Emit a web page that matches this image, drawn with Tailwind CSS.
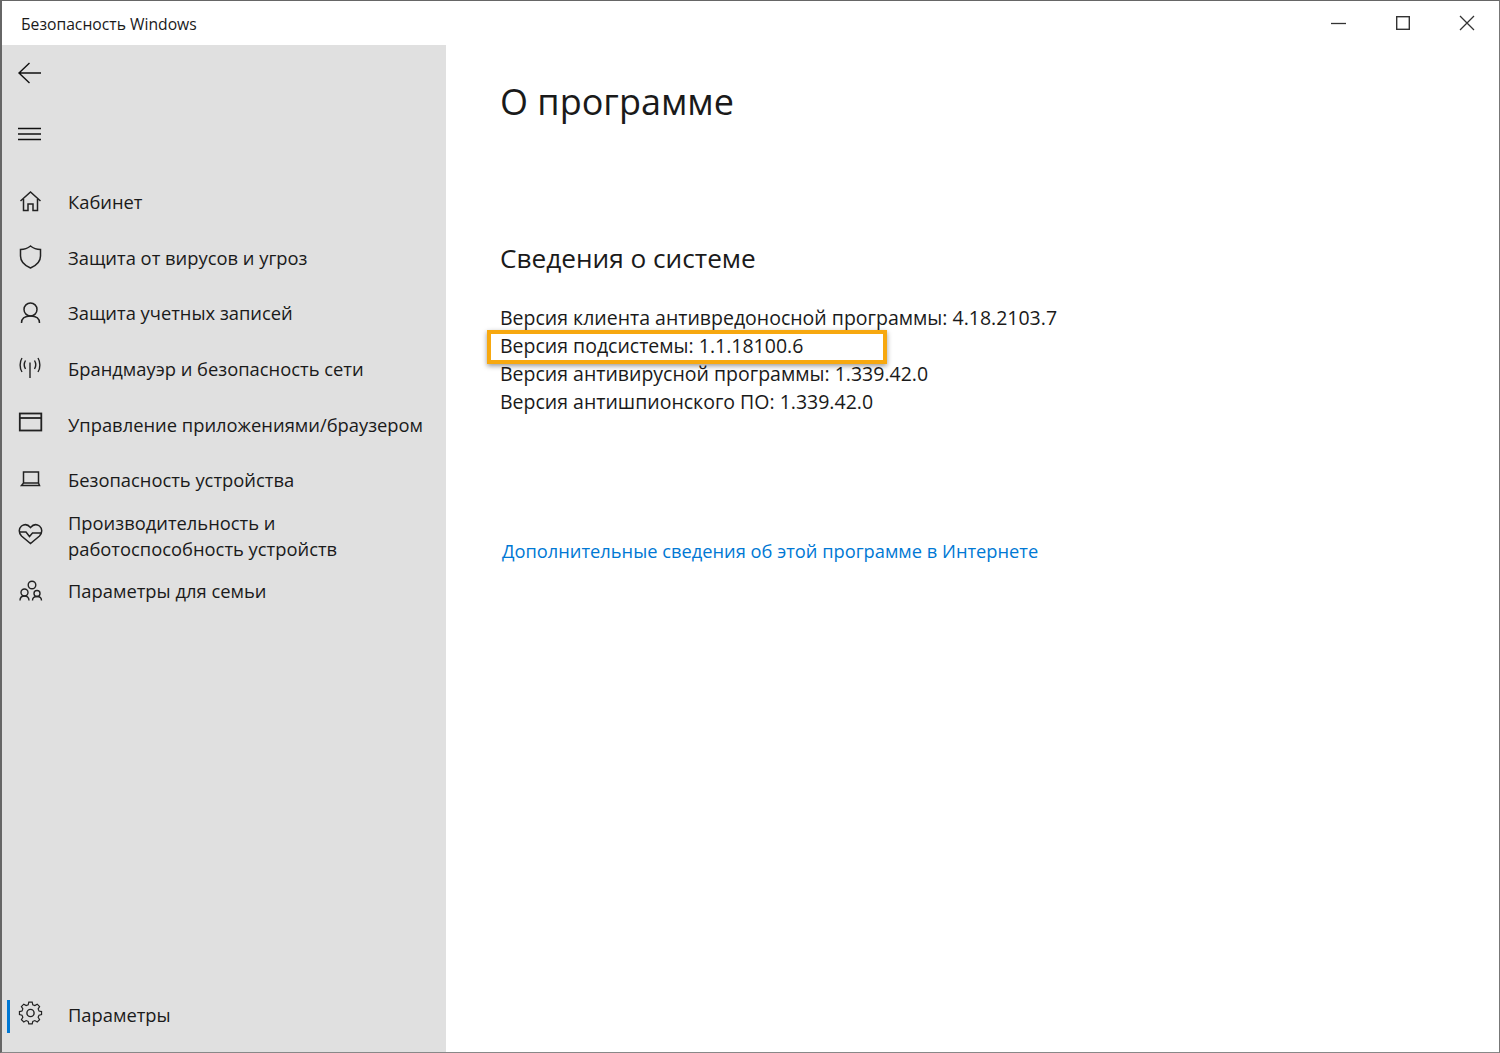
<!DOCTYPE html>
<html lang="ru">

<head>
  <meta charset="UTF-8" />
  <meta name="viewport" content="width=device-width, initial-scale=1.0" />
  <title>Безопасность Windows</title>
  <script src="https://cdn.jsdelivr.net/npm/@tailwindcss/browser@4"></script>
</head>

<body class="bg-white font-['Open_Sans','Noto_Sans',sans-serif] text-[#1a1a1a]">
  <div class="w-[1500px] h-[1053px] flex flex-col overflow-hidden border-t border-t-[#666] border-l-2 border-l-[#666] border-r border-r-[#777] border-b border-b-[#888]">

    <!-- title bar -->
    <header class="h-[44px] shrink-0 flex items-center justify-between bg-white">
      <span class="pl-[19px] text-[15.7px] pt-[3px]">Безопасность Windows</span>
      <div class="flex items-center pr-[22px] gap-[44px]">
        <svg width="20" height="20" viewBox="0 0 20 20" fill="none" stroke="#333" stroke-width="1.3"><path d="M2 10.500h15" /></svg>
        <svg width="20" height="20" viewBox="0 0 20 20" fill="none" stroke="#333" stroke-width="1.4"><rect x="3.700" y="3.700" width="12.600" height="12.600" /></svg>
        <svg width="20" height="20" viewBox="0 0 20 20" fill="none" stroke="#333" stroke-width="1.3"><path d="M3 3l14 14M17 3L3 17" /></svg>
      </div>
    </header>

    <div class="flex-1 flex min-h-0">
      <!-- sidebar -->
      <aside class="w-[444px] shrink-0 bg-[#e0e0e0] flex flex-col text-[18.35px] leading-[26px]">
        <div class="h-[55px] flex items-center pl-[15px]">
          <svg width="26" height="24" viewBox="0 0 26 24" fill="none" stroke="#111" stroke-width="1.4"><path d="M24 12H2M12.500 2L2 12l10.500 10" /></svg>
        </div>
        <div class="h-[68px] flex items-center pl-[15px] mb-[6.500px]">
          <svg width="24" height="16" viewBox="0 0 24 16" fill="none" stroke="#111" stroke-width="1.4"><path d="M1 2.500h23M1 8h23M1 13.500h23" /></svg>
        </div>

        <nav class="flex flex-col">
          <a class="h-[55.6px] flex items-center gap-[25px] pl-[15px]">
            <svg class="shrink-0 -mt-[2px]" width="26" height="26" viewBox="0 0 26 26" fill="none" stroke="#222" stroke-width="1.5"><path d="M3.500 13L13.500 4l10 9M6.500 11v11.500H11V16h5v6.500h4.500V11" /></svg>
            <span>Кабинет</span>
          </a>
          <a class="h-[55.6px] flex items-center gap-[25px] pl-[15px]">
            <svg class="shrink-0 -mt-[2px]" width="26" height="26" viewBox="0 0 26 26" fill="none" stroke="#222" stroke-width="1.5"><path d="M13.500 2c3 2.500 6 3.500 10 3.500V12c0 6-4 9.500-10 12-6-2.500-10-6-10-12V5.500c4 0 7-1 10-3.500z" /></svg>
            <span>Защита от вирусов и угроз</span>
          </a>
          <a class="h-[55.6px] flex items-center gap-[25px] pl-[15px]">
            <svg class="shrink-0 -mt-[2px]" width="26" height="26" viewBox="0 0 26 26" fill="none" stroke="#222" stroke-width="1.5"><circle cx="13.500" cy="10.500" r="6.500" /><path d="M4.500 24c0-4.500 3.500-7 9-7s9 2.500 9 7" /></svg>
            <span>Защита учетных записей</span>
          </a>
          <a class="h-[55.6px] flex items-center gap-[25px] pl-[15px]">
            <svg class="shrink-0 -mt-[5px]" width="26" height="26" viewBox="0 0 26 26" fill="none" stroke="#222" stroke-width="1.4"><path d="M13 8.500V24M8.500 6.500c-1.500 2.500-1.500 6 0 8.500M17.500 6.500c1.500 2.500 1.500 6 0 8.500M5 4c-2.500 4-2.500 10 0 14M21 4c2.500 4 2.500 10 0 14" /></svg>
            <span>Брандмауэр и безопасность сети</span>
          </a>
          <a class="h-[55.6px] flex items-center gap-[25px] pl-[15px]">
            <svg class="shrink-0 -mt-[3px]" width="26" height="26" viewBox="0 0 26 26" fill="none" stroke="#222" stroke-width="1.8"><rect x="2.800" y="3.500" width="21.500" height="17" /><path d="M2.800 8h21.500" /></svg>
            <span>Управление приложениями/браузером</span>
          </a>
          <a class="h-[55.6px] flex items-center gap-[25px] pl-[15px]">
            <svg class="shrink-0 -mt-[2px]" width="26" height="26" viewBox="0 0 26 26" fill="none" stroke="#222" stroke-width="1.5"><path d="M6.500 17V6H21.500V17M4.500 19.500h18L21.500 17h-15z" /></svg>
            <span>Безопасность устройства</span>
          </a>
          <a class="h-[55.6px] flex items-center gap-[25px] pl-[15px]">
            <svg class="shrink-0 -mt-[4px]" width="26" height="26" viewBox="0 0 26 26" fill="none" stroke="#222" stroke-width="1.5"><path d="M4.500 15C1.500 12 1.500 7.500 4.500 5c3-2 6.500-1.500 9 1.500 2.500-3 6-3.500 9-1.500 3 2.500 3 7 0 10l-9 7.500z" /><path d="M3 11h6l3.500 4.500 3-3.500h8.500" /></svg>
            <span>Производительность и<br />работоспособность устройств</span>
          </a>
          <a class="h-[55.6px] flex items-center gap-[25px] pl-[15px]">
            <svg class="shrink-0 -mt-[2px]" width="26" height="26" viewBox="0 0 26 26" fill="none" stroke="#222" stroke-width="1.4"><circle cx="15" cy="8" r="3.800" /><circle cx="7.500" cy="15.500" r="3.500" /><circle cx="20" cy="16.500" r="3" /><path d="M3 23.500c0-3 2-4.500 4.500-4.500s4.500 1.500 4.500 4.500M15.500 23.500c0-2.500 1.500-4 4.500-4s4.500 1.500 4.500 4" /></svg>
            <span>Параметры для семьи</span>
          </a>
        </nav>

        <div class="mt-auto mb-[9px] h-[55.6px] flex items-center relative gap-[25px] pl-[15px]">
          <span class="absolute left-[5px] top-[13px] w-[3px] h-[33px] bg-[#0078d4]"></span>
          <svg class="shrink-0 -mt-[5px]" width="26" height="26" viewBox="0 0 26 26" fill="none" stroke="#222" stroke-width="1.4"><circle cx="13.500" cy="13" r="3.600" /><path d="M11 2.500h4l.7 3.200 2.400 1 2.800-1.700 2.800 2.800-1.700 2.800 1 2.400 3 .7v3.600l-3 .7-1 2.400 1.700 2.800-2.800 2.800-2.800-1.700-2.400 1-.7 3h-4l-.7-3-2.400-1-2.800 1.700-2.800-2.800 1.700-2.800-1-2.400-3-.7v-3.600l3-.7 1-2.400-1.700-2.800 2.800-2.800 2.800 1.700 2.400-1z" transform="translate(13.500 13) scale(.85) translate(-13 -15.400)" /></svg>
          <span>Параметры</span>
        </div>
      </aside>

      <!-- main -->
      <main class="flex-1 pl-[54px] bg-white">
        <h1 class="text-[36px] leading-[48px] mt-[33px]">О программе</h1>
        <h2 class="text-[26.2px] leading-[36px] mt-[114px]">Сведения о системе</h2>
        <div class="mt-[28px] text-[19.5px] leading-[28px]">
          <p>Версия клиента антивредоносной программы: 4.18.2103.7</p>
          <p class="relative">Версия подсистемы: 1.1.18100.6
            <span class="absolute left-[-13px] top-[-2px] w-[400px] h-[34px] border-[4px] border-[#f7a80f] shadow-[0_2px_5px_rgba(0,0,0,0.4)]"></span>
          </p>
          <p>Версия антивирусной программы: 1.339.42.0</p>
          <p>Версия антишпионского ПО: 1.339.42.0</p>
        </div>
        <a class="block mt-[122px] ml-[2px] text-[18.3px] leading-[26px] text-[#0078d4]">Дополнительные сведения об этой программе в Интернете</a>
      </main>
    </div>
  </div>
</body>

</html>
